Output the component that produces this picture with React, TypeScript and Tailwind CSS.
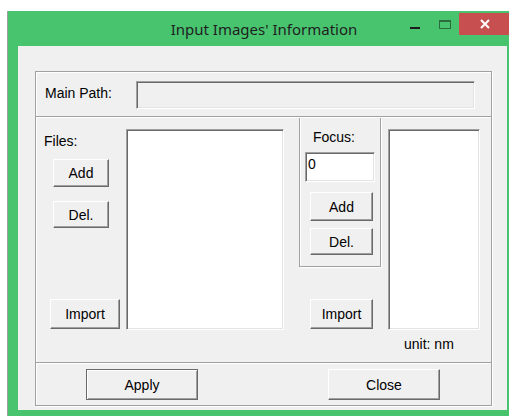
import React from 'react';

const sysFont = "font-['Liberation_Sans',Arial,sans-serif] text-[14px] leading-[16px] text-black";

// raised Win32-style push button
function PushButton({ label, className = '', isDefault = false }: { label: string; className?: string; isDefault?: boolean }) {
  const frame = isDefault
    ? 'border border-[#696969] shadow-[inset_1px_1px_0_#fff,inset_-1px_-1px_0_#a0a0a0]'
    : 'border border-t-white border-l-white border-r-[#696969] border-b-[#696969] shadow-[inset_-1px_-1px_0_#a0a0a0]';
  return (
    <button type="button" className={`flex shrink-0 items-center justify-center bg-[#f0f0f0] ${frame} ${className}`}>
      {label}
    </button>
  );
}

// sunken edit / list box
function Sunken({ className = '', children }: { className?: string; children?: React.ReactNode }) {
  return (
    <div
      className={`shrink-0 border border-t-[#a0a0a0] border-l-[#a0a0a0] border-r-white border-b-white shadow-[inset_1px_1px_0_#696969,inset_-1px_-1px_0_#e3e3e3] ${className}`}
    >
      {children}
    </div>
  );
}

function CaptionButtons() {
  return (
    <div className="col-start-1 row-start-1 flex items-start pl-[402px]">
      <div className="mt-[16px] h-[2px] w-[10px] bg-[#1c1c1c]" />
      <div className="ml-[19px] mt-[9px] h-[9px] w-[12px] border border-t-2 border-[#2b6b3e]" />
      <div className="ml-[8px] mt-[2px] flex h-[22px] w-[52px] items-center justify-center bg-[#c84f4f]">
        <svg width="10" height="10" viewBox="0 0 10 10">
          <path d="M1 1 L9 9 M9 1 L1 9" stroke="#fff" strokeWidth="2" />
        </svg>
      </div>
    </div>
  );
}

export default function App() {
  return (
    <div className="h-[416px] w-[509px] overflow-hidden bg-white pl-[7px] pt-[11px]">
      <div className="flex h-[405px] w-[513px] flex-col border-l border-[#a0a0a0] bg-[#48c46f]">
        {/* title bar */}
        <div className="grid h-[35px] shrink-0">
          <div className="col-start-1 row-start-1 flex items-center justify-center pt-[1px] font-['Noto_Sans',sans-serif] text-[15px] leading-[20px] text-[#1e1e1e]">
            Input Images' Information
          </div>
          <CaptionButtons />
        </div>

        {/* client area */}
        <div className={`ml-[10px] h-[364px] w-[489px] bg-[#f0f0f0] pl-[17px] pt-[25px] ${sysFont}`}>
          <div className="flex h-[335px] w-[457px] flex-col border border-[#a0a0a0] shadow-[inset_1px_1px_0_#fff,1px_1px_0_#fff]">
            {/* main path */}
            <div className="flex h-[45px] shrink-0 items-start border-b border-[#a0a0a0] pl-[9px] pt-[9px]">
              <span className="mt-[4px] w-[91px]">Main Path:</span>
              <Sunken className="h-[28px] w-[339px] bg-[#f0f0f0]" />
            </div>

            {/* files / focus */}
            <div className="flex h-[245px] shrink-0 border-t border-white">
              <div className="flex w-[90px] shrink-0 flex-col items-start">
                <span className="ml-[8px] mt-[15px]">Files:</span>
                <PushButton label="Add" className="ml-[17px] mt-[10px] h-[28px] w-[56px]" />
                <PushButton label="Del." className="ml-[17px] mt-[14px] h-[27px] w-[56px]" />
                <PushButton label="Import" className="ml-[14px] mt-[71px] h-[30px] w-[70px]" />
              </div>

              <Sunken className="mt-[11px] h-[201px] w-[158px] bg-white" />

              <div className="ml-[15px] flex w-[82px] shrink-0 flex-col">
                <div className="flex h-[149px] flex-col items-start border-x border-b border-[#a0a0a0] shadow-[inset_1px_0_0_#fff,1px_1px_0_#fff]">
                  <span className="ml-[13px] mt-[11px]">Focus:</span>
                  <Sunken className="ml-[5px] mt-[7px] h-[30px] w-[70px] bg-white pl-[2px] pt-[3px]">0</Sunken>
                  <PushButton label="Add" className="ml-[10px] mt-[10px] h-[29px] w-[63px]" />
                  <PushButton label="Del." className="ml-[10px] mt-[7px] h-[27px] w-[63px]" />
                </div>
                <PushButton label="Import" className="ml-[11px] mt-[32px] h-[30px] w-[63px]" />
              </div>

              <div className="ml-[7px] flex w-[92px] shrink-0 flex-col">
                <Sunken className="mt-[11px] h-[201px] w-[92px] bg-white" />
                <span className="ml-[16px] mt-[6px]">unit: nm</span>
              </div>
            </div>

            {/* dialog buttons */}
            <div className="flex h-[43px] shrink-0 items-start border-t border-[#a0a0a0] pl-[50px] pt-[6px] shadow-[inset_0_1px_0_#fff]">
              <PushButton label="Apply" isDefault className="h-[31px] w-[112px]" />
              <PushButton label="Close" className="ml-[130px] h-[31px] w-[112px]" />
            </div>
          </div>
        </div>
      </div>
    </div>
  );
}
